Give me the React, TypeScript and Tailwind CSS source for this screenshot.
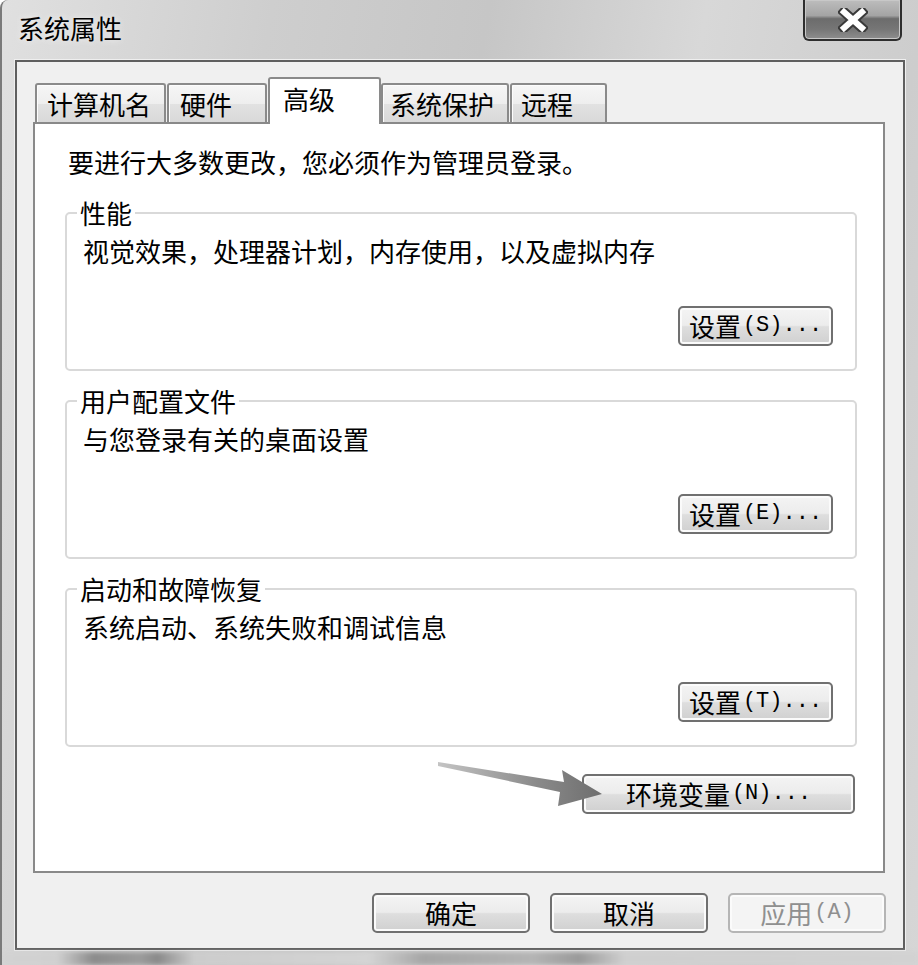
import React from 'react';

// Windows 7 style "System Properties" dialog, Advanced tab

const CJK = "font-['Noto_Sans_CJK_SC',sans-serif]";

function WinButton({
  label,
  hotkey,
  disabled,
  className,
}: {
  label: string;
  hotkey?: string;
  disabled?: boolean;
  className?: string;
}) {
  return (
    <button
      type="button"
      disabled={disabled}
      className={`h-[40px] rounded-[5px] border-2 flex items-center justify-center text-[26px] leading-none shadow-[inset_0_0_0_2px_#fbfbfb] ${
        disabled
          ? 'border-[#b5b5b5] text-[#8f8f8f] bg-[#f4f4f4]'
          : 'border-[#707070] text-black bg-[linear-gradient(to_bottom,#f4f4f4_0%,#ececec_48%,#dedede_52%,#d0d0d0_100%)]'
      } ${className ?? ''}`}
    >
      <span>{label}</span>
      {hotkey && <span className="font-['Liberation_Mono',monospace] text-[22px] ml-[2px]">{hotkey}</span>}
    </button>
  );
}

function Tab({ label, width, pl, selected }: { label: string; width: string; pl: string; selected?: boolean }) {
  return (
    <div
      className={`${width} ${pl} border-2 border-b-0 border-[#8a8a8a] rounded-t-[3px] text-[26px] leading-[28px] text-black ${
        selected
          ? 'h-[47px] -mb-[2px] pt-[6px] bg-white relative z-10'
          : 'h-[39px] pt-[5px] mr-[1px] bg-[linear-gradient(to_bottom,#f6f6f6_0%,#eeeeee_50%,#e2e2e2_51%,#d9d9d9_100%)] shadow-[inset_1px_1px_0_#fcfcfc]'
      }`}
    >
      {label}
    </div>
  );
}

function Group({ title, text, label, hotkey }: { title: string; text: string; label: string; hotkey: string }) {
  return (
    <fieldset className="w-[792px] ml-[30px] border-2 border-[#d9d9d9] rounded-[5px] px-0 pb-[23px]">
      <legend className="ml-[10px] px-[3px] text-[26px] leading-[28px]">{title}</legend>
      <p className="mt-[10px] pl-[16px] text-[26px] leading-[28px]">{text}</p>
      <div className="mt-[41px] flex justify-end pr-[22px]">
        <WinButton label={label} hotkey={hotkey} className="w-[155px]" />
      </div>
    </fieldset>
  );
}

export default function App() {
  return (
    <div
      className={`relative w-[918px] h-[965px] overflow-hidden ${CJK} text-black border-l-2 border-[#7a7a7a] rounded-tl-[8px] bg-[linear-gradient(100deg,#e0e0e0_0%,#cecece_25%,#c6c6c6_45%,#d8d8d8_65%,#cdcdcd_85%,#d6d6d6_100%)]`}
    >
      {/* title bar */}
      <div className="flex h-[60px]">
        <div className="pl-[16px] pt-[14px] text-[26px] leading-[28px] [text-shadow:0_0_6px_#f4f4f4]">系统属性</div>
        <div className="ml-auto mr-[16px] w-[99px] h-[41px] border-2 border-t-0 border-[#2e2e2e] rounded-b-[6px] flex items-center justify-center bg-[linear-gradient(to_bottom,#bdbdbd_0%,#a4a4a4_40%,#6c6c6c_48%,#767676_75%,#8e8e8e_100%)] shadow-[inset_0_0_0_1px_#c8c8c8]">
          <svg width="30" height="24" viewBox="0 0 30 24">
            <path d="M6 4 L24 20 M24 4 L6 20" stroke="#3a3a3a" strokeWidth="10" strokeLinecap="square" />
            <path d="M6 4 L24 20 M24 4 L6 20" stroke="#ffffff" strokeWidth="6" strokeLinecap="square" />
          </svg>
        </div>
      </div>

      {/* client area */}
      <div className="ml-[13px] w-[890px] h-[890px] border-2 border-[#5f5f5f] bg-[#f0f0f0] shadow-[0_0_0_1px_#efefef] pt-[15px] px-[16px]">
        <div className="flex items-end h-[45px] pl-[2px]">
          <Tab label="计算机名" width="w-[131px]" pl="pl-[10px]" />
          <Tab label="硬件" width="w-[100px]" pl="pl-[11px]" />
          <Tab label="高级" width="w-[113px]" pl="pl-[13px]" selected />
          <Tab label="系统保护" width="w-[128px]" pl="pl-[7px]" />
          <Tab label="远程" width="w-[97px]" pl="pl-[9px]" />
        </div>

        <div className="w-[852px] h-[751px] border-2 border-[#898989] bg-white pt-[24px]">
          <p className="pl-[33px] text-[26px] leading-[28px]">要进行大多数更改，您必须作为管理员登录。</p>
          <div className="mt-[23px] flex flex-col gap-[16px]">
            <Group title="性能" text="视觉效果，处理器计划，内存使用，以及虚拟内存" label="设置" hotkey="(S)..." />
            <Group title="用户配置文件" text="与您登录有关的桌面设置" label="设置" hotkey="(E)..." />
            <Group title="启动和故障恢复" text="系统启动、系统失败和调试信息" label="设置" hotkey="(T)..." />
          </div>
          <div className="mt-[27px] flex justify-end pr-[28px]">
            <WinButton label="环境变量" hotkey="(N)..." className="w-[273px] h-[39px]" />
          </div>
        </div>

        <div className="mt-[20px] flex justify-end gap-[20px] pr-[1px]">
          <WinButton label="确定" className="w-[158px]" />
          <WinButton label="取消" className="w-[158px]" />
          <WinButton label="应用" hotkey="(A)" disabled className="w-[158px]" />
        </div>
      </div>

      {/* glass reflection under the client area */}
      <div className="mt-[2px] h-[13px] blur-[2px] bg-[linear-gradient(90deg,#d2d2d2_0%,#d0d0d0_6%,#8c8c8c_10%,#9c9c9c_15%,#8a8a8a_17%,#cccccc_21%,#d4d4d4_40%,#a6a6a6_46%,#b4b4b4_58%,#9a9a9a_63%,#cfcfcf_68%,#d2d2d2_100%)]" />

      {/* annotation arrow */}
      <svg className="absolute left-[430px] top-[755px]" width="180" height="60" viewBox="0 0 180 60">
        <defs>
          <linearGradient id="arrowFill" x1="0" y1="0" x2="1" y2="0">
            <stop offset="0" stopColor="#c4c4c4" />
            <stop offset="0.6" stopColor="#8a8a8a" />
            <stop offset="1" stopColor="#6e6e6e" />
          </linearGradient>
        </defs>
        <polygon points="6,7 132,27 130,15 170,39 126,51 128,37 6,11" fill="url(#arrowFill)" />
      </svg>
    </div>
  );
}
